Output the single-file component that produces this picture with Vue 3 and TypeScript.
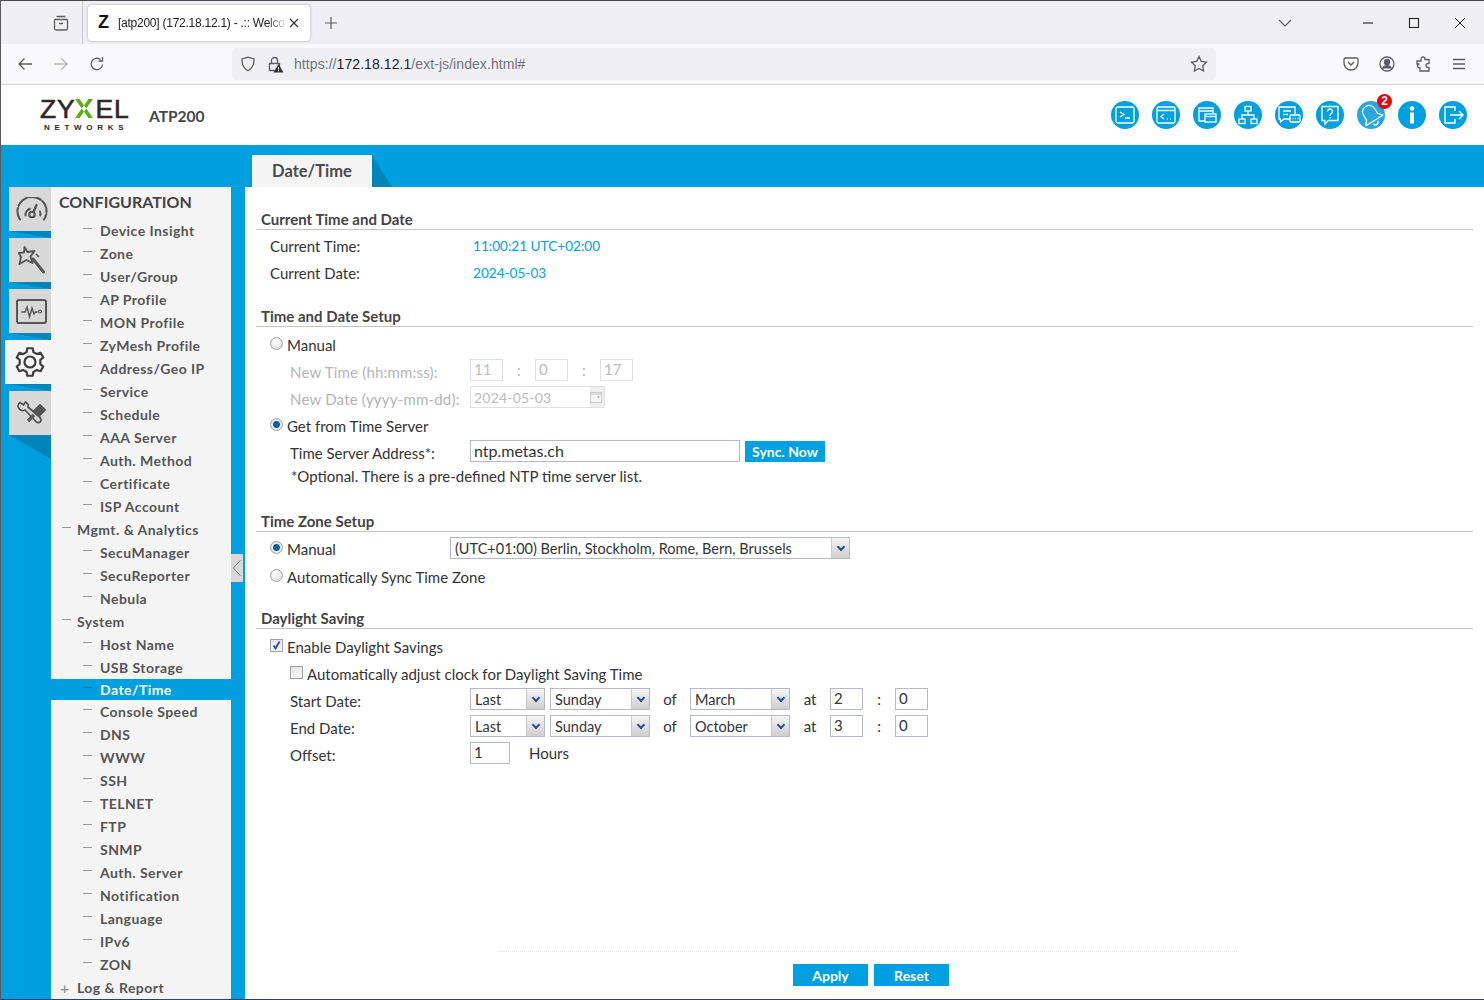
<script setup lang="ts">
interface NavItem {
  label: string
  level: number
  sign?: string
  active?: boolean
}

const navItems: NavItem[] = [
  ...['Device Insight', 'Zone', 'User/Group', 'AP Profile', 'MON Profile', 'ZyMesh Profile', 'Address/Geo IP', 'Service', 'Schedule', 'AAA Server', 'Auth. Method', 'Certificate', 'ISP Account'].map((label) => ({ label, level: 2 })),
  { label: 'Mgmt. & Analytics', level: 1 },
  ...['SecuManager', 'SecuReporter', 'Nebula'].map((label) => ({ label, level: 2 })),
  { label: 'System', level: 1 },
  { label: 'Host Name', level: 2 },
  { label: 'USB Storage', level: 2 },
  { label: 'Date/Time', level: 2, active: true },
  ...['Console Speed', 'DNS', 'WWW', 'SSH', 'TELNET', 'FTP', 'SNMP', 'Auth. Server', 'Notification', 'Language', 'IPv6', 'ZON'].map((label) => ({ label, level: 2 })),
  { label: 'Log & Report', level: 1, sign: '+' }
]

const dstRows = [
  { label: 'Start Date:', month: 'March', hour: '2' },
  { label: 'End Date:', month: 'October', hour: '3' }
]

// six teeth, one pointing straight up
const gearPath = (() => {
  const pt = (r: number, deg: number) => {
    const a = ((deg - 90) * Math.PI) / 180
    return `${(15 + r * Math.cos(a)).toFixed(2)} ${(15 + r * Math.sin(a)).toFixed(2)}`
  }
  let d = ''
  for (let i = 0; i < 6; i++) {
    const c = i * 60
    d += `${i ? 'L' : 'M'}${pt(10.5, c - 19)}L${pt(14, c - 11)}L${pt(14, c + 11)}L${pt(10.5, c + 19)}`
  }
  return d + 'Z'
})()
</script>

<template>
  <div class="window">
    <!-- browser chrome -->
    <div class="tabbar">
      <div class="tabbar-side">
        <svg width="18" height="18" viewBox="0 0 18 18" fill="none" stroke="#5b5b66" stroke-width="1.3"><path d="M4.500 2.500h9M2.500 5.500h13M2.500 5.500v9a1.500 1.500 0 0 0 1.500 1.500h10a1.500 1.500 0 0 0 1.500-1.500v-9M7 9.500h4"/></svg>
      </div>
      <div class="tab">
        <span class="tab-z">Z</span>
        <span class="tab-title">[atp200] (172.18.12.1) - .:: Welco</span>
        <svg width="12" height="12" viewBox="0 0 12 12" stroke="#333" stroke-width="1.2"><path d="M2 2l8 8M10 2l-8 8"/></svg>
      </div>
      <svg class="tab-plus" width="14" height="14" viewBox="0 0 14 14" stroke="#5b5b66" stroke-width="1.2"><path d="M7 1v12M1 7h12"/></svg>
      <div class="spacer"></div>
      <svg class="tab-list" width="14" height="8" viewBox="0 0 14 8" fill="none" stroke="#5b5b66" stroke-width="1.2"><path d="M1 1l6 6 6-6"/></svg>
      <div class="win-controls">
        <svg width="12" height="12" viewBox="0 0 12 12" stroke="#222" stroke-width="1.1"><path d="M1 6h10"/></svg>
        <svg width="12" height="12" viewBox="0 0 12 12" fill="none" stroke="#222" stroke-width="1.1"><rect x="1.500" y="1.500" width="9" height="9"/></svg>
        <svg width="12" height="12" viewBox="0 0 12 12" stroke="#222" stroke-width="1"><path d="M1 1l10 10M11 1L1 11"/></svg>
      </div>
    </div>

    <div class="toolbar">
      <svg class="tb-back" width="16" height="16" viewBox="0 0 16 16" fill="none" stroke="#5b5b66" stroke-width="1.3"><path d="M15 8H2M7.500 2.500L2 8l5.500 5.500"/></svg>
      <svg class="tb-fwd" width="16" height="16" viewBox="0 0 16 16" fill="none" stroke="#b4b4ba" stroke-width="1.3"><path d="M1 8h13M8.500 2.500L14 8l-5.500 5.500"/></svg>
      <svg class="tb-reload" width="16" height="16" viewBox="0 0 16 16" fill="none" stroke="#5b5b66" stroke-width="1.3"><path d="M13.500 8.500A5.700 5.700 0 1 1 11.500 3.600M13.500 1v4h-4"/></svg>
      <div class="urlbar">
        <svg width="16" height="16" viewBox="0 0 16 16" fill="none" stroke="#5b5b66" stroke-width="1.3"><path d="M8 1.200l6 1.800c.2 5.500-1.800 9.500-6 11.800C3.800 12.500 1.800 8.500 2 3z"/></svg>
        <svg class="lock" width="17" height="17" viewBox="0 0 17 17"><path d="M4.500 7V4.500a3 3 0 0 1 6 0V7M2.500 7.500h10v7h-10z" fill="none" stroke="#5b5b66" stroke-width="1.300"/><path d="M11.500 8l5 8.500h-10z" fill="#333"/><path d="M11.500 11v2.500M11.500 14.300v1" stroke="#fff"/></svg>
        <span class="url"><span class="url-dim">https://</span>172.18.12.1<span class="url-dim">/ext-js/index.html#</span></span>
        <div class="spacer"></div>
        <svg width="18" height="18" viewBox="0 0 18 18" fill="none" stroke="#5b5b66" stroke-width="1.300"><path d="M9 1.500l2.300 4.900 5.200.7-3.800 3.600.9 5.300L9 13.500 4.400 16l.9-5.300L1.500 7.100l5.200-.7z"/></svg>
      </div>
      <div class="tb-right">
        <svg width="16" height="16" viewBox="0 0 16 16" fill="none" stroke="#5b5b66" stroke-width="1.300"><path d="M2.500 2h11A1.500 1.500 0 0 1 15 3.500V7A7 7 0 0 1 1 7V3.500A1.500 1.500 0 0 1 2.500 2zM5 6l3 3 3-3"/></svg>
        <svg width="16" height="16" viewBox="0 0 16 16" fill="none" stroke="#5b5b66" stroke-width="1.300"><circle cx="8" cy="8" r="7"/><circle cx="8" cy="6" r="2.600" fill="#5b5b66"/><path d="M3.500 12.500c1-2 2.500-2.800 4.500-2.800s3.500.8 4.500 2.800" fill="#5b5b66"/></svg>
        <svg width="16" height="16" viewBox="0 0 16 16" fill="none" stroke="#5b5b66" stroke-width="1.300"><path d="M6 3.500V3a2 2 0 0 1 4 0v.5h4v4h-1a2 2 0 0 0 0 4h1V15H5v-3h-.5a2 2 0 0 1 0-4H2V5h4z"/></svg>
        <svg width="16" height="16" viewBox="0 0 16 16" stroke="#5b5b66" stroke-width="1.300"><path d="M2 3.500h12M2 8h12M2 12.500h12"/></svg>
      </div>
    </div>

    <!-- device header -->
    <header class="head">
      <div class="logo">
        <div class="logo-word"><span>ZY</span><svg class="logo-x" width="18" height="19" viewBox="0 0 18 19"><path d="M0 0h4.500L18 19h-4.500zM18 0h-4.500L0 19h4.500z" fill="#5cae14"/></svg><span>EL</span></div>
        <div class="logo-sub">NETWORKS</div>
      </div>
      <div class="model">ATP200</div>
      <div class="spacer"></div>
      <div class="head-icons">
        <span class="hi"><svg width="22" height="22" viewBox="0 0 22 22" fill="none" stroke="#fff" stroke-width="1.300"><rect x="2" y="3" width="18" height="16" rx="2"/><path d="M6 8l4 2.500L6 13M11 14h5"/></svg></span>
        <span class="hi"><svg width="22" height="22" viewBox="0 0 22 22" fill="none" stroke="#fff" stroke-width="1.300"><rect x="2" y="3" width="18" height="16" rx="1.500"/><path d="M2 6.500h18M9 10l-3 2.500L9 15M12 15h.8M15 15h.8"/></svg></span>
        <span class="hi"><svg width="22" height="22" viewBox="0 0 22 22" fill="none" stroke="#fff" stroke-width="1.300"><path d="M9 17H3V4h14v5M3 7h14"/><rect x="9" y="10" width="11" height="8"/><path d="M9 12.500h11"/></svg></span>
        <span class="hi"><svg width="22" height="22" viewBox="0 0 22 22" fill="none" stroke="#fff" stroke-width="1.300"><rect x="8" y="2.500" width="6" height="4.500"/><rect x="2" y="15" width="6" height="4.500"/><rect x="14" y="15" width="6" height="4.500"/><path d="M11 7v4M5 15v-4h12v4"/></svg></span>
        <span class="hi"><svg width="24" height="22" viewBox="0 0 24 22" fill="none" stroke="#fff" stroke-width="1.300"><path d="M13 15H7l-3.500 3v-3H2V3h16v7M6 7h8M6 10.500h5"/><rect x="13" y="11" width="10" height="7" rx="1" fill="#009fdf"/><path d="M15.500 14.500h1M18 14.500h1M20.500 14.500h1"/></svg></span>
        <span class="hi"><svg width="22" height="22" viewBox="0 0 22 22" fill="none" stroke="#fff" stroke-width="1.400"><path d="M3 2.500h16v14H9.500L6 20v-3.500H3z"/><path d="M8.500 7.500a2.500 2.500 0 1 1 3.800 2.200c-.9.500-1.300 1-1.300 2M11 13v1.300"/></svg></span>
        <span class="hi hi-bell"><svg width="26" height="26" viewBox="0 0 26 26" fill="none" stroke="#fff" stroke-width="1.300" stroke-linejoin="round"><g transform="rotate(-32 13 13)"><path d="M13 3c-4 0-6.500 3-6.500 7v5l-3.500 4.500h20L19.500 15v-5c0-4-2.500-7-6.500-7z"/><path d="M10.500 21.500a2.500 2.500 0 0 0 5 0"/></g></svg><span class="badge">2</span></span>
        <span class="hi"><svg width="22" height="22" viewBox="0 0 22 22" fill="#fff"><circle cx="11" cy="4.500" r="2.300"/><rect x="9" y="8.500" width="4" height="11" rx=".6"/></svg></span>
        <span class="hi"><svg width="24" height="22" viewBox="0 0 24 22" fill="none" stroke="#fff" stroke-width="1.400"><path d="M14 7V3H4v16h10v-4M9 11h13M18 7l4 4-4 4"/></svg></span>
      </div>
    </header>

    <!-- main area -->
    <div class="app">
      <div class="app-top">
        <div class="page-tab">Date/Time</div>
        <div class="page-tab-fold"></div>
      </div>
      <div class="app-body">
        <div class="rail">
          <div class="rail-btn">
            <svg class="rail-ico" width="32" height="24" viewBox="0 0 32 24" fill="none" stroke="#555" stroke-width="2.100" stroke-linecap="round"><path d="M4 22.500A14.500 14.500 0 1 1 28 22.500" stroke-dasharray="12 2.200"/><path d="M9.500 18.500a7 7 0 0 1 4.500-6.800M24 14.500a7 7 0 0 1 .3 4" stroke-width="2"/><circle cx="16" cy="17.500" r="2.800"/><path d="M17.500 15l3-7" stroke-width="2.400"/></svg>
          </div>
          <div class="rail-fold"></div>
          <div class="rail-btn">
            <svg class="rail-ico" width="27" height="28" viewBox="0 0 27 28" fill="none" stroke="#555" stroke-width="1.900" stroke-linejoin="round"><path d="M6.500 1l3 5 7-1-4 5.500 2 6.500-6-3-7 4 1.500-7L.8 7l5.200-.5z"/><path d="M15 13l10.500 13" stroke-width="3" stroke-linecap="round"/><path d="M18 8l3 3" stroke-width="1.500"/></svg>
          </div>
          <div class="rail-fold"></div>
          <div class="rail-btn">
            <svg class="rail-ico" width="31" height="25" viewBox="0 0 31 25" fill="none" stroke="#555" stroke-width="2"><rect x="1" y="1" width="29" height="23" rx="2"/><path d="M5.500 13H9l2-5 2.500 10 2.500-9 2 6 1.500-2h2" stroke-width="1.400"/><circle cx="24" cy="12.500" r="1.500" stroke-width="1.200"/></svg>
          </div>
          <div class="rail-fold"></div>
          <div class="rail-btn rail-btn--active">
            <svg class="rail-ico" width="30" height="30" viewBox="0 0 30 30" fill="none" stroke="#3d3d3d" stroke-width="2.200" stroke-linejoin="round"><path :d="gearPath"/><circle cx="15" cy="15" r="5.500"/></svg>
          </div>
          <div class="rail-fold"></div>
          <div class="rail-btn">
            <svg class="rail-ico" width="29" height="25" viewBox="0 0 29 25" fill="none" stroke="#555" stroke-width="1.800" stroke-linejoin="round"><path d="M3 1.500C1 3 .5 5.500 2 7.500s4 2.500 6 1.500l11 11.500c1.500 1.500 3.500 1.500 4.500 0s.5-3-1-4.500L11 6c.5-2-.5-4-2.500-5l-2 3z"/><path d="M23 4l5 5-6 6-5-5z" fill="#555"/><path d="M17 14l-6 6" stroke-width="3.200"/></svg>
          </div>
          <div class="rail-fold rail-fold--big"></div>
        </div>

        <nav class="nav">
          <div class="nav-title">CONFIGURATION</div>
          <div
            v-for="item in navItems"
            :key="item.label"
            class="nav-item"
            :class="[`nav-item--l${item.level}`, { 'nav-item--active': item.active }]"
          >
            <span class="nav-sign"><template v-if="item.sign">{{ item.sign }}</template><i v-else class="nav-dash"></i></span>
            <span>{{ item.label }}</span>
          </div>
        </nav>

        <div class="collapse-col">
          <div class="collapse">
            <svg width="10" height="20" viewBox="0 0 10 20" fill="none" stroke="#777" stroke-width="1"><path d="M8.500 2L1.500 10l7 8"/></svg>
          </div>
        </div>

        <main class="panel">
          <section class="group group--first">
            <h3 class="group-title">Current Time and Date</h3>
            <div class="info-row"><span class="info-label">Current Time:</span><span class="info-value">11:00:21 UTC+02:00</span></div>
            <div class="info-row info-row--2"><span class="info-label">Current Date:</span><span class="info-value">2024-05-03</span></div>
          </section>

          <section class="group group--setup">
            <h3 class="group-title">Time and Date Setup</h3>
            <label class="opt opt--a"><span class="radio"></span>Manual</label>
            <div class="sub-row sub-row--dis">
              <span class="sub-label">New Time (hh:mm:ss):</span>
              <input class="txt txt--s" disabled value="11" />
              <span class="colon">:</span>
              <input class="txt txt--s" disabled value="0" />
              <span class="colon">:</span>
              <input class="txt txt--s" disabled value="17" />
            </div>
            <div class="sub-row sub-row--dis">
              <span class="sub-label">New Date (yyyy-mm-dd):</span>
              <div class="date-field">
                <span>2024-05-03</span>
                <span class="date-btn"><svg width="12" height="12" viewBox="0 0 12 12"><rect x=".5" y="1.500" width="11" height="10" fill="#f4f4f4" stroke="#ccc"/><rect x="1" y="2" width="10" height="2" fill="#ddd"/><circle cx="8.500" cy="6" r="1" fill="#e09a9a"/></svg></span>
              </div>
            </div>
            <label class="opt opt--b"><span class="radio radio--on"></span>Get from Time Server</label>
            <div class="sub-row sub-row--server">
              <span class="sub-label">Time Server Address*:</span>
              <input class="txt txt--server" value="ntp.metas.ch" />
              <button class="btn btn--sync">Sync. Now</button>
            </div>
            <div class="hint">*Optional. There is a pre-defined NTP time server list.</div>
          </section>

          <section class="group group--zone">
            <h3 class="group-title">Time Zone Setup</h3>
            <div class="zone-row">
              <label class="opt zone-opt"><span class="radio radio--on"></span>Manual</label>
              <div class="sel sel--zone"><span>(UTC+01:00) Berlin, Stockholm, Rome, Bern, Brussels</span><span class="sel-btn"><i class="chev"></i></span></div>
            </div>
            <label class="opt opt--c"><span class="radio"></span>Automatically Sync Time Zone</label>
          </section>

          <section class="group group--dst">
            <h3 class="group-title">Daylight Saving</h3>
            <label class="opt opt--d"><span class="check check--on"><svg width="11" height="11" viewBox="0 0 11 11" fill="none" stroke="#2b4f9e" stroke-width="1.800"><path d="M2.500 5.500l2 3 4-7"/></svg></span>Enable Daylight Savings</label>
            <label class="opt opt--e"><span class="check"></span>Automatically adjust clock for Daylight Saving Time</label>
            <div v-for="row in dstRows" :key="row.label" class="dst-row">
              <span class="sub-label">{{ row.label }}</span>
              <div class="sel sel--last"><span>Last</span><span class="sel-btn"><i class="chev"></i></span></div>
              <div class="sel sel--day"><span>Sunday</span><span class="sel-btn"><i class="chev"></i></span></div>
              <span class="dst-of">of</span>
              <div class="sel sel--month"><span>{{ row.month }}</span><span class="sel-btn"><i class="chev"></i></span></div>
              <span class="dst-at">at</span>
              <input class="txt txt--s" :value="row.hour" />
              <span class="dst-colon">:</span>
              <input class="txt txt--s" value="0" />
            </div>
            <div class="dst-row">
              <span class="sub-label">Offset:</span>
              <input class="txt txt--offset" value="1" />
              <span class="dst-hours">Hours</span>
            </div>
          </section>

          <div class="spacer"></div>
          <footer class="actions">
            <button class="btn btn--act">Apply</button>
            <button class="btn btn--act">Reset</button>
          </footer>
        </main>
      </div>
    </div>
  </div>
</template>

<style scoped>
.window {
  position: relative;
  width: 1484px;
  height: 1000px;
  display: flex;
  flex-direction: column;
  overflow: hidden;
  font-family: "Lato", "Liberation Sans", sans-serif;
  color: #3a3a3a;
}

/* thin window frame over everything */
.window::after {
  content: "";
  position: absolute;
  inset: 0;
  pointer-events: none;
  border-left: 1px solid #5a5a5a;
  border-bottom: 1px solid #2f4068;
}

.spacer {
  flex: 1;
}

/* browser chrome */
.tabbar {
  height: 44px;
  flex: none;
  display: flex;
  align-items: center;
  background: #f0f0f4;
  border-top: 1px solid #4a4a4a;
  box-sizing: border-box;
  font-family: "Liberation Sans", sans-serif;
}

.tabbar-side {
  width: 83px;
  height: 43px;
  box-sizing: border-box;
  padding-left: 52px;
  display: flex;
  align-items: center;
  border-right: 1px solid #c8c8cc;
  flex: none;
}

.tab {
  margin-left: 5px;
  width: 222px;
  height: 36px;
  box-sizing: border-box;
  padding: 0 10px;
  display: flex;
  align-items: center;
  background: #fff;
  border-radius: 4px;
  box-shadow: 0 0 3px rgba(0, 0, 0, 0.3);
}

.tab-z {
  font-size: 18px;
  font-weight: 700;
  width: 20px;
  color: #111;
}

.tab-title {
  flex: 1;
  font-size: 12px;
  letter-spacing: -0.25px;
  color: #222;
  white-space: nowrap;
  -webkit-mask-image: linear-gradient(to right, #000 88%, transparent);
  mask-image: linear-gradient(to right, #000 88%, transparent);
}

.tab-plus {
  margin-left: 14px;
}

.tab-list {
  margin-right: 70px;
}

.win-controls {
  display: flex;
  gap: 34px;
  padding-right: 18px;
}

.toolbar {
  height: 41px;
  box-sizing: border-box;
  flex: none;
  display: flex;
  align-items: center;
  background: #f9f9fb;
  border-bottom: 1px solid #cfcfd4;
}

.tb-back {
  margin-left: 17px;
}

.tb-fwd {
  margin-left: 20px;
}

.tb-reload {
  margin-left: 20px;
}

.urlbar {
  margin-left: 127px;
  width: 984px;
  height: 32px;
  box-sizing: border-box;
  padding: 0 8px;
  display: flex;
  align-items: center;
  background: #f0f0f4;
  border-radius: 4px;
}

.lock {
  margin-left: 11px;
}

.url {
  margin-left: 10px;
  font-family: "Liberation Sans", sans-serif;
  font-size: 14px;
  letter-spacing: 0.07px;
  color: #1d1b26;
}

.url-dim {
  color: #70707a;
}

.tb-right {
  margin-left: 127px;
  display: flex;
  gap: 20px;
}

/* device header */
.head {
  height: 60px;
  flex: none;
  display: flex;
  align-items: center;
  background: #fff;
  padding: 0 17px 0 40px;
}

.logo {
  width: 109px;
}

.logo-word {
  display: flex;
  align-items: center;
  height: 20px;
  font-family: "Liberation Sans", sans-serif;
  font-size: 26.500px;
  line-height: 20px;
  color: #2f2826;
  letter-spacing: 0.8px;
  -webkit-text-stroke: 0.6px #2f2826;
}

.logo-x {
  margin: 0 2px 0 0;
}

.logo-sub {
  margin-top: 4px;
  font-family: "Liberation Sans", sans-serif;
  font-size: 8px;
  line-height: 9px;
  font-weight: 700;
  letter-spacing: 4.7px;
  padding-left: 4px;
  color: #2f2826;
  white-space: nowrap;
}

.model {
  margin-top: 2px;
  font-weight: 700;
  font-size: 15.500px;
  color: #444;
}

.head-icons {
  display: flex;
  gap: 13px;
}

.hi {
  position: relative;
  width: 28px;
  height: 28px;
  border-radius: 50%;
  background: #009fdf;
  display: flex;
  align-items: center;
  justify-content: center;
}

.hi-bell {
  background: #29a5df;
}

.badge {
  position: absolute;
  top: -7px;
  right: -7px;
  width: 15px;
  height: 15px;
  border-radius: 50%;
  background: #e8000e;
  color: #fff;
  font: 700 12px/15px "Liberation Sans", sans-serif;
  text-align: center;
}

/* main area */
.app {
  flex: 1;
  min-height: 0;
  display: flex;
  flex-direction: column;
  background: #009fdf;
}

.app-top {
  height: 42px;
  flex: none;
  display: flex;
  align-items: flex-end;
  padding-left: 252px;
}

.page-tab {
  width: 120px;
  height: 32px;
  background: #f4f4f4;
  font-size: 16.500px;
  font-weight: 700;
  line-height: 32px;
  text-align: center;
  color: #4a4a4a;
}

.page-tab-fold {
  width: 0;
  height: 0;
  border-bottom: 32px solid #0085bb;
  border-right: 20px solid transparent;
}

.app-body {
  flex: 1;
  min-height: 0;
  display: flex;
}

.rail {
  width: 51px;
  flex: none;
  display: flex;
  flex-direction: column;
  align-items: flex-end;
}

.rail-btn {
  width: 42px;
  height: 44px;
  background: #d8d8d8;
  display: flex;
  align-items: center;
  justify-content: center;
}

.rail-ico {
  margin-left: 3px;
}

.rail-btn--active {
  width: 46px;
  background: #f4f4f4;
}

.rail-fold {
  width: 42px;
  height: 7px;
  background: linear-gradient(to top right, transparent 49%, #0085bb 51%);
}

.rail-fold--big {
  height: 24px;
}

.nav {
  width: 180px;
  flex: none;
  background: #f4f4f4;
  overflow: hidden;
}

.nav-title {
  height: 32px;
  padding-left: 8px;
  font-size: 16px;
  font-weight: 700;
  line-height: 30px;
  color: #444;
}

.nav-item {
  height: 23px;
  display: flex;
  align-items: center;
  font-size: 14px;
  font-weight: 700;
  color: #555;
  letter-spacing: 0.45px;
  white-space: nowrap;
}

.nav-item--l2 {
  padding-left: 32px;
}

.nav-item--l1 {
  padding-left: 9px;
}

.nav-sign {
  width: 17px;
  flex: none;
  font-size: 16px;
  font-weight: 400;
  color: #888;
  letter-spacing: 0;
}

.nav-dash {
  display: block;
  width: 9px;
  height: 1px;
  margin-top: -3px;
  background: #999;
}

.nav-item--l1 .nav-dash {
  margin-left: 2px;
}

.nav-item--active {
  height: 21px;
  background: #009fdf;
  color: #fff;
}

.nav-item--active .nav-dash {
  background: #0078a8;
}

.collapse-col {
  width: 14px;
  flex: none;
  padding-top: 367px;
}

.collapse {
  width: 12px;
  height: 28px;
  background: #d8d8d8;
  display: flex;
  align-items: center;
  justify-content: center;
}

.panel {
  flex: 1;
  min-width: 0;
  display: flex;
  flex-direction: column;
  background: #fff;
  padding: 0 11px;
  box-sizing: border-box;
  font-size: 15px;
  color: #333;
}

.group-title {
  margin: 0;
  height: 18px;
  font-size: 15px;
  font-weight: 700;
  line-height: 18px;
  color: #444;
  border-bottom: 1px solid #c4c4c4;
  padding: 0 5px 1px;
}

.group--first {
  padding-top: 23px;
}

.group--setup {
  padding-top: 21px;
}

.group--zone {
  padding-top: 26px;
}

.group--dst {
  padding-top: 22px;
}

.info-row {
  display: flex;
  height: 27px;
  align-items: center;
  margin-top: 2px;
  padding-left: 14px;
}

.info-row--2 {
  margin-top: 0;
}

.info-label {
  width: 203px;
}

.info-value {
  color: #009fdf;
  font-size: 13.600px;
}

.opt {
  display: flex;
  align-items: center;
  height: 20px;
  padding-left: 14px;
  white-space: nowrap;
}

.opt--a {
  margin-top: 8px;
}

.opt--b {
  margin-top: 8px;
}

.opt--c {
  margin-top: 8px;
}

.opt--d {
  margin-top: 8px;
}

.opt--e {
  margin-top: 7px;
  padding-left: 34px;
}

.radio {
  box-sizing: border-box;
  width: 13px;
  height: 13px;
  margin: -3px 4px 0 0;
  border-radius: 50%;
  border: 1px solid #a0a0a0;
  background: radial-gradient(circle at 40% 35%, #fff, #d4d4d4);
  flex: none;
}

.radio--on {
  background: radial-gradient(circle, #0c5f9f 0 3px, #e8e8e8 4px);
}

.check {
  box-sizing: border-box;
  width: 13px;
  height: 13px;
  margin: -3px 4px 0 0;
  border: 1px solid #a0a0a0;
  background: linear-gradient(#e6e6e6, #f8f8f8);
  flex: none;
  display: flex;
}

.sub-row {
  display: flex;
  align-items: center;
  height: 22px;
  margin-top: 4px;
  padding-left: 34px;
  white-space: nowrap;
}

.sub-row--dis {
  color: #b4b4b4;
  letter-spacing: 0.2px;
}

.sub-row--dis + .sub-row--dis {
  margin-top: 5px;
}

.sub-label {
  width: 180px;
  flex: none;
  padding-top: 3px;
}

.txt {
  box-sizing: border-box;
  height: 22px;
  border: 1px solid #b5b8c8;
  background: #fff;
  padding: 0 3px 2px;
  font: inherit;
  color: #333;
  outline: none;
}

.txt--s {
  width: 33px;
}

.txt:disabled {
  border-color: #e0e0e0;
  color: #bbb;
}

.colon {
  width: 32px;
  text-align: center;
}

.date-field {
  width: 135px;
  height: 22px;
  box-sizing: border-box;
  border: 1px solid #e0e0e0;
  padding-left: 3px;
  display: flex;
  align-items: center;
  justify-content: space-between;
  color: #bbb;
  font-size: 14px;
}

.date-btn {
  width: 14px;
  height: 20px;
  background: #eee;
  display: flex;
  align-items: center;
}

.txt--server {
  width: 270px;
  font-size: 16px;
}

.btn {
  border: none;
  background: #009fdf;
  color: #fff;
  font-family: inherit;
  font-weight: 700;
  font-size: 14px;
  padding: 0;
}

.btn--sync {
  margin-left: 5px;
  width: 80px;
  height: 21px;
}

.hint {
  margin-top: 4px;
  padding-left: 35px;
  height: 20px;
  line-height: 20px;
}

.zone-row {
  display: flex;
  align-items: center;
  margin-top: 5px;
}

.zone-opt {
  box-sizing: border-box;
  width: 194px;
  height: 22px;
  flex: none;
  padding-top: 2px;
}

.sel {
  box-sizing: border-box;
  height: 22px;
  border: 1px solid #b5b8c8;
  background: #fff;
  padding-left: 4px;
  display: flex;
  align-items: center;
  justify-content: space-between;
  white-space: nowrap;
  flex: none;
  font-size: 14.500px;
}

.sel-btn {
  width: 17px;
  height: 20px;
  background: linear-gradient(#f4f4f4, #cfcfcf);
  border-left: 1px solid #c8c8c8;
  display: flex;
  align-items: center;
  justify-content: center;
}

.chev {
  width: 4px;
  height: 4px;
  margin-top: -3px;
  border-right: 2px solid #2b4f9e;
  border-bottom: 2px solid #2b4f9e;
  transform: rotate(45deg);
}

.sel--zone {
  width: 400px;
}

.sel--last {
  width: 75px;
}

.sel--day {
  width: 100px;
  margin-left: 5px;
}

.sel--month {
  width: 100px;
}

.dst-row {
  display: flex;
  align-items: center;
  height: 22px;
  margin-top: 5px;
  padding-left: 34px;
  white-space: nowrap;
}

.opt--e + .dst-row {
  margin-top: 4px;
}

.dst-of {
  width: 40px;
  text-align: center;
}

.dst-at {
  width: 40px;
  text-align: center;
}

.dst-colon {
  width: 32px;
  text-align: center;
}

.txt--offset {
  width: 40px;
}

.dst-hours {
  margin-left: 19px;
}

.actions {
  display: flex;
  justify-content: center;
  gap: 6px;
  height: 36px;
  margin: 0 236px 0 244px;
  padding: 12px 0 0 5px;
  border-top: 1px dotted #ddd;
}

.btn--act {
  width: 75px;
  height: 22px;
}
</style>

<style>
html,
body {
  margin: 0;
  overflow: hidden;
}
</style>
